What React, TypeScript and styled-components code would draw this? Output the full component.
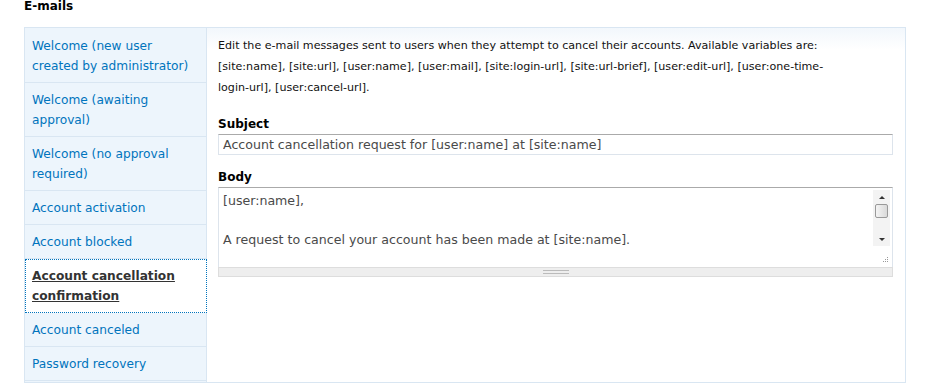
import React from 'react';
import styled, { createGlobalStyle } from 'styled-components';

const GlobalStyle = createGlobalStyle`
  html, body {
    margin: 0;
    padding: 0;
    background: #fff;
  }
  body {
    font-family: "DejaVu Sans", Verdana, sans-serif;
    font-size: 13px;
    line-height: 20px;
    color: #333;
  }
`;

const Page = styled.div`
  padding: 0 24px;
  width: 882px;
`;

const Heading = styled.h2`
  margin: -2px 0 0;
  font-size: 12px;
  line-height: 16px;
  font-weight: bold;
  color: #000;
  height: 29px;
`;

const Tabs = styled.div`
  display: flex;
  border: 1px solid #d9e6f2;
  box-sizing: border-box;
  height: 356px;
`;

const TabList = styled.ul`
  list-style: none;
  margin: 0;
  padding: 1px 0 0;
  width: 181px;
  flex: none;
  background: #edf5fc;
  border-right: 1px solid #d9e6f2;
`;

const TabItem = styled.li<{ $selected?: boolean }>`
  border-bottom: 1px solid ${(p) => (p.$selected ? 'transparent' : '#d9e6f2')};
  background: ${(p) => (p.$selected ? '#fff' : 'transparent')};
  outline: ${(p) => (p.$selected ? '1px dotted #0074bd' : 'none')};
  outline-offset: -1px;
  margin-right: ${(p) => (p.$selected ? '-1px' : '0')};
  position: relative;
`;

const TabLink = styled.a<{ $selected?: boolean }>`
  display: block;
  padding: 7px 7px 6px;
  font-size: 12.2px;
  line-height: 20px;
  color: ${(p) => (p.$selected ? '#333' : '#0074bd')};
  font-weight: ${(p) => (p.$selected ? 'bold' : 'normal')};
  text-decoration: ${(p) => (p.$selected ? 'underline' : 'none')};
  cursor: pointer;
`;

const Pane = styled.div`
  flex: 1;
  padding: 7px 12px 0 11px;
  background: linear-gradient(to bottom, #f2f7fc 0px, #ffffff 22px);
`;

const Description = styled.p`
  margin: 0;
  max-width: 630px;
  font-size: 11.1px;
  line-height: 21px;
  color: #111;
`;

const Field = styled.div<{ $top: number }>`
  margin-top: ${(p) => p.$top}px;
`;

const Label = styled.label`
  display: block;
  font-size: 12px;
  line-height: 20px;
  font-weight: bold;
  color: #000;
`;

const TextInput = styled.input`
  display: block;
  box-sizing: border-box;
  width: 100%;
  height: 21px;
  margin: 0;
  padding: 0 4px;
  border: 1px solid #dde4ec;
  border-top-color: #aaa;
  font-family: "DejaVu Sans", Verdana, sans-serif;
  font-size: 12.6px;
  color: #4a4a4a;
  background: #fff;
`;

const TextareaBox = styled.div`
  display: flex;
  height: 80px;
  box-sizing: border-box;
  border: 1px solid #dde4ec;
  border-top-color: #aaa;
  border-bottom: none;
  background: #fff;
`;

const Textarea = styled.textarea`
  flex: 1;
  border: none;
  outline: none;
  resize: none;
  overflow: hidden;
  margin: 0;
  padding: 3px 4px;
  font-family: "DejaVu Sans", Verdana, sans-serif;
  font-size: 12.6px;
  line-height: 19.5px;
  color: #4a4a4a;
`;

const ScrollColumn = styled.div`
  width: 17px;
  display: flex;
  flex-direction: column;
  padding: 2px 2px 0 0;
`;

const ScrollTrack = styled.div`
  height: 56px;
  background: #f3f3f3;
  display: flex;
  flex-direction: column;
  align-items: center;
`;

const Arrow = styled.div<{ $down?: boolean }>`
  height: 14px;
  width: 100%;
  display: flex;
  align-items: center;
  justify-content: center;
  &::after {
    content: '';
    width: 0;
    height: 0;
    border-left: 3px solid transparent;
    border-right: 3px solid transparent;
    ${(p) => (p.$down ? 'border-top: 3px solid #333;' : 'border-bottom: 3px solid #333;')}
  }
`;

const Thumb = styled.div`
  width: 13px;
  height: 14px;
  box-sizing: border-box;
  border: 1px solid #999;
  border-radius: 2px;
  background: linear-gradient(to right, #f4f4f4, #d9d9d9);
  margin-bottom: 14px;
`;

const ResizeDots = styled.div`
  flex: 1;
  display: flex;
  align-items: flex-end;
  justify-content: flex-end;
  padding: 0 1px 3px 0;
`;

const Grippie = styled.div`
  height: 10px;
  box-sizing: border-box;
  background: #eee;
  border: 1px solid #ddd;
  display: flex;
  align-items: center;
  justify-content: center;
  &::after {
    content: '';
    width: 26px;
    height: 2px;
    border-top: 1px solid #bbb;
    border-bottom: 1px solid #bbb;
  }
`;

const tabs = [
  'Welcome (new user created by administrator)',
  'Welcome (awaiting approval)',
  'Welcome (no approval required)',
  'Account activation',
  'Account blocked',
  'Account cancellation confirmation',
  'Account canceled',
  'Password recovery',
];

const selected = 'Account cancellation confirmation';

export default function App() {
  return (
    <>
      <GlobalStyle />
      <Page>
        <Heading>E-mails</Heading>
        <Tabs>
          <TabList>
            {tabs.map((t) => (
              <TabItem key={t} $selected={t === selected}>
                <TabLink $selected={t === selected}>{t}</TabLink>
              </TabItem>
            ))}
          </TabList>
          <Pane>
            <Description>
              Edit the e-mail messages sent to users when they attempt to cancel their accounts.
              Available variables are: [site:name], [site:url], [user:name], [user:mail],
              [site:login-url], [site:url-brief], [user:edit-url], [user:one-time-login-url],
              [user:cancel-url].
            </Description>
            <Field $top={16}>
              <Label>Subject</Label>
              <TextInput
                readOnly
                value="Account cancellation request for [user:name] at [site:name]"
              />
            </Field>
            <Field $top={12}>
              <Label>Body</Label>
              <TextareaBox>
                <Textarea
                  readOnly
                  value={
                    '[user:name],\n\nA request to cancel your account has been made at [site:name].\n\nYou may now cancel your account on [site:url-brief] by clicking this link'
                  }
                />
                <ScrollColumn>
                  <ScrollTrack>
                    <Arrow />
                    <Thumb />
                    <Arrow $down />
                  </ScrollTrack>
                  <ResizeDots>
                    <svg width="7" height="7" viewBox="0 0 7 7">
                      <rect x="5" y="0" width="1" height="1" fill="#999" />
                      <rect x="3" y="2" width="1" height="1" fill="#999" />
                      <rect x="5" y="2" width="1" height="1" fill="#999" />
                      <rect x="1" y="4" width="1" height="1" fill="#999" />
                      <rect x="3" y="4" width="1" height="1" fill="#999" />
                      <rect x="5" y="4" width="1" height="1" fill="#999" />
                    </svg>
                  </ResizeDots>
                </ScrollColumn>
              </TextareaBox>
              <Grippie />
            </Field>
          </Pane>
        </Tabs>
      </Page>
    </>
  );
}
